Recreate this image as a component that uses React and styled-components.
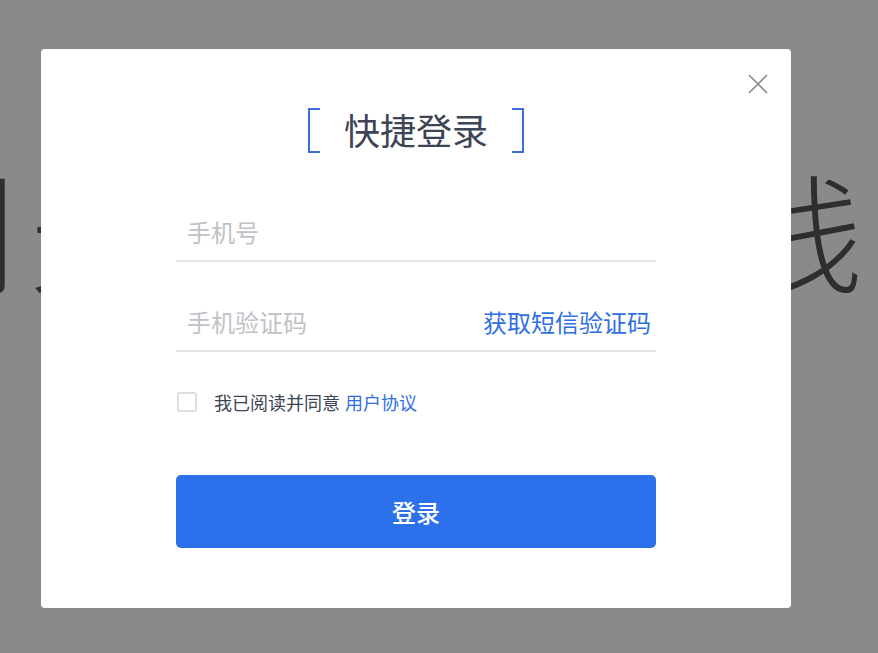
import React from "react";
import styled, { createGlobalStyle } from "styled-components";

const GlobalStyle = createGlobalStyle`
  html, body {
    margin: 0;
    padding: 0;
    background: #ffffff;
    overflow: hidden;
  }
  * {
    box-sizing: border-box;
  }
`;

const Page = styled.div`
  width: 878px;
  height: 653px;
  padding-top: 165px;
  overflow: hidden;
`;

const BigText = styled.div`
  margin-left: -111px;
  white-space: nowrap;
  font-family: "Noto Sans CJK SC", sans-serif;
  font-weight: 200;
  font-size: 128px;
  line-height: 1;
  letter-spacing: 13px;
  color: #555555;
`;

const Overlay = styled.div`
  position: fixed;
  inset: 0;
  display: flex;
  align-items: center;
  justify-content: center;
  padding: 4px 46px 0 0;
  background: rgba(0, 0, 0, 0.46);
`;

const Modal = styled.div`
  position: relative;
  width: 750px;
  height: 559px;
  padding-top: 59px;
  background: #ffffff;
  border-radius: 4px;
  display: flex;
  flex-direction: column;
  align-items: center;
  font-family: "Noto Sans CJK SC", "Noto Sans", sans-serif;
`;

const CloseButton = styled.button`
  position: absolute;
  top: 24px;
  right: 22px;
  width: 22px;
  height: 22px;
  padding: 0;
  border: 0;
  background: none;
  cursor: pointer;
`;

const Title = styled.h2`
  margin: 0;
  display: flex;
  align-items: center;
  gap: 24px;
  height: 45px;
  font-size: 36px;
  font-weight: 400;
  line-height: 1;
  color: #3d4455;
  padding-bottom: 3px;
`;

const Bracket = styled.span`
  width: 12px;
  height: 45px;
  margin-bottom: -3px;
  border: 2px solid #3e6fd6;
  border-left-width: ${(p) => (p.side === "left" ? "2px" : "0")};
  border-right-width: ${(p) => (p.side === "right" ? "2px" : "0")};
`;

const Form = styled.form`
  width: 480px;
  margin-top: 53px;
  display: flex;
  flex-direction: column;
`;

const Field = styled.div`
  display: flex;
  align-items: center;
  height: 56px;
  padding: 0 5px 3px 11px;
  border-bottom: 2px solid #e4e4e7;
  & + & {
    margin-top: 34px;
  }
`;

const Input = styled.input`
  flex: 1;
  min-width: 0;
  height: 36px;
  border: 0;
  outline: none;
  padding: 0;
  font-family: inherit;
  font-size: 24px;
  color: #333;
  background: transparent;
  &::placeholder {
    color: #c0c1c7;
  }
`;

const SmsLink = styled.a`
  font-size: 24px;
  color: #2f6fe2;
  text-decoration: none;
  white-space: nowrap;
  cursor: pointer;
`;

const Agreement = styled.label`
  display: flex;
  align-items: center;
  margin-top: 40px;
  height: 20px;
  font-size: 18px;
  color: #3d4455;
`;

const Check = styled.span`
  width: 20px;
  height: 20px;
  margin: 0 17px 0 1px;
  border: 2px solid #dcdee4;
  border-radius: 3px;
`;

const Protocol = styled.a`
  margin-left: 5px;
  color: #2f6fe2;
  text-decoration: none;
`;

const Submit = styled.button`
  margin-top: 63px;
  height: 73px;
  border: 0;
  border-radius: 5px;
  background: #2c71eb;
  color: #ffffff;
  font-family: inherit;
  font-size: 24px;
  font-weight: 500;
  cursor: pointer;
`;

const App = () => {
  return (
    <>
      <GlobalStyle />
      <Page>
        <BigText>利光车票务在线</BigText>
      </Page>
      <Overlay>
        <Modal>
          <CloseButton aria-label="关闭">
            <svg width="22" height="22" viewBox="0 0 22 22">
              <path
                d="M2 2L20 20M20 2L2 20"
                stroke="#8e8e8e"
                strokeWidth="1.6"
                fill="none"
              />
            </svg>
          </CloseButton>
          <Title>
            <Bracket side="left" />
            快捷登录
            <Bracket side="right" />
          </Title>
          <Form onSubmit={(e) => e.preventDefault()}>
            <Field>
              <Input placeholder="手机号" />
            </Field>
            <Field>
              <Input placeholder="手机验证码" />
              <SmsLink>获取短信验证码</SmsLink>
            </Field>
            <Agreement>
              <Check />
              我已阅读并同意
              <Protocol>用户协议</Protocol>
            </Agreement>
            <Submit type="submit">登录</Submit>
          </Form>
        </Modal>
      </Overlay>
    </>
  );
};

export default App;
